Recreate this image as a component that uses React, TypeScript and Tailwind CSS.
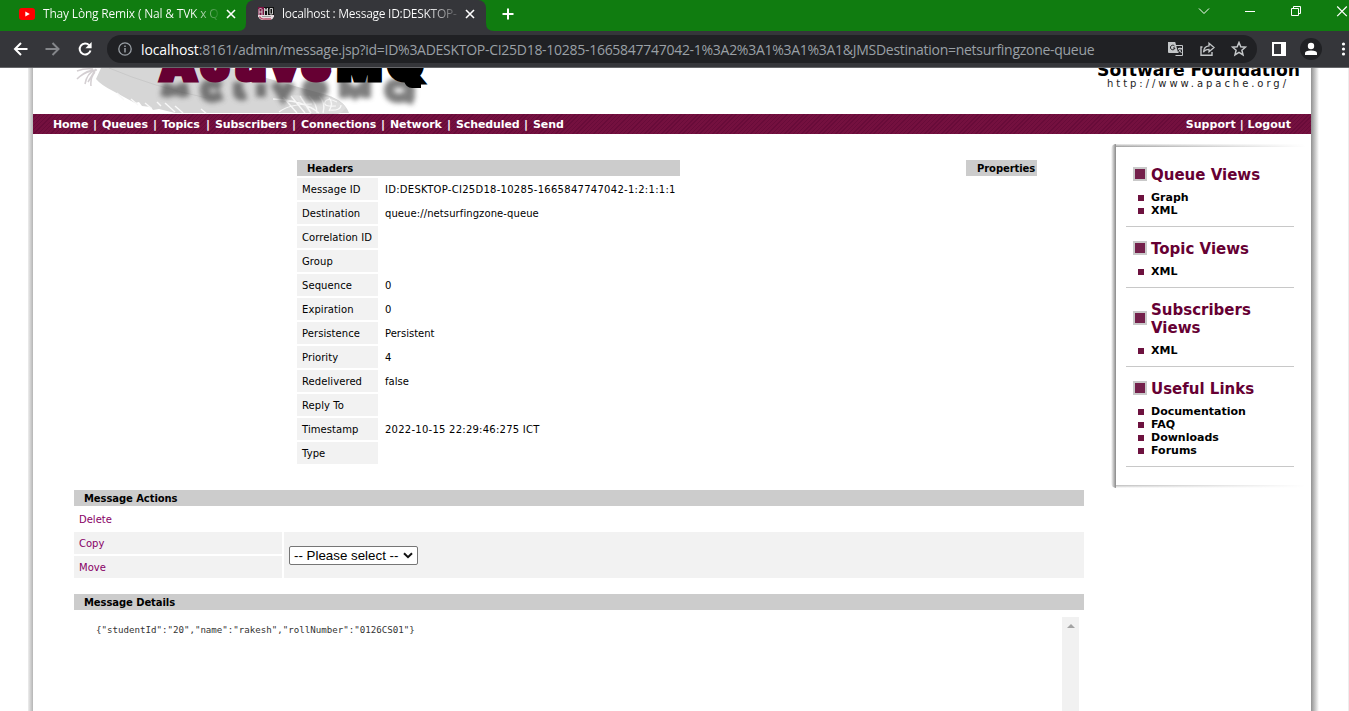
import React from "react";

const headers: { name: string; value: string; tracking?: string }[] = [
  { name: "Message ID", value: "ID:DESKTOP-CI25D18-10285-1665847747042-1:2:1:1:1", tracking: "tracking-[0.28px]" },
  { name: "Destination", value: "queue://netsurfingzone-queue", tracking: "tracking-[0.09px]" },
  { name: "Correlation ID", value: "" },
  { name: "Group", value: "" },
  { name: "Sequence", value: "0" },
  { name: "Expiration", value: "0" },
  { name: "Persistence", value: "Persistent" },
  { name: "Priority", value: "4" },
  { name: "Redelivered", value: "false" },
  { name: "Reply To", value: "" },
  { name: "Timestamp", value: "2022-10-15 22:29:46:275 ICT", tracking: "tracking-[0.25px]" },
  { name: "Type", value: "" },
];

const navItems = [
  { label: "Home", width: "w-[49px]" },
  { label: "Queues", width: "w-[60px]" },
  { label: "Topics", width: "w-[53px]" },
  { label: "Subscribers", width: "w-[86px]" },
  { label: "Connections", width: "w-[89px]" },
  { label: "Network", width: "w-[66px]" },
  { label: "Scheduled", width: "w-[77px]" },
];

function CloseGlyph() {
  return (
    <svg width="10" height="10" viewBox="0 0 10 10" className="shrink-0" fill="none" stroke="#fff" strokeWidth="1.6">
      <path d="M1 1l8 8M9 1l-8 8" />
    </svg>
  );
}

function TabStrip() {
  return (
    <div className="flex h-[31px] bg-[#107c10] text-[12px] text-white">
      <div className="flex h-7 w-[238px] items-center pl-[19px]">
        <svg width="16" height="12" viewBox="0 0 16 12" className="shrink-0">
          <rect width="16" height="12" rx="3" fill="#f00" />
          <path d="M6.3 3.4v5.2L10.8 6z" fill="#fff" />
        </svg>
        <div className="ml-[8px] w-[176px] bg-linear-to-r from-white from-85% to-white/10 bg-clip-text tracking-[-0.19px] whitespace-nowrap text-transparent">
          Thay Lòng Remix ( Nal &amp; TVK x Q
        </div>
        <div className="ml-[7px] flex">
          <CloseGlyph />
        </div>
      </div>
      <div className="flex h-[31px] w-[256px]">
        <svg width="8" height="31" viewBox="0 0 8 31" className="shrink-0">
          <path d="M8 0v31H0q8 0 8-8z" fill="#35363a" />
        </svg>
        <div className="flex w-[240px] items-center rounded-t-[8px] bg-[#35363a] pb-[3px] pl-[12px]">
          <svg width="16" height="14" viewBox="0 0 16 14" className="shrink-0">
            <rect x="0" y="0" width="6" height="8" fill="#7b1443" />
            <rect x="6" y="0" width="10" height="8" fill="#111" />
            <path d="M1 8V2.500L2.500 1 4 2.500V8M1 5h3M6.500 8V1l1.500 3 1.500-3v7M12 1.500h2.500v5.500H12z" fill="none" stroke="#ddd" strokeWidth=".9" />
            <path d="M0 8h16v1.500q-1 3-4 3.500H4Q1 12 0 9.500z" fill="#e9dce1" />
            <path d="M1.500 9.500Q3 12.500 7 12h6" fill="none" stroke="#b84a68" strokeWidth="1.300" />
            <path d="M4 9.500h9" stroke="#999" />
          </svg>
          <div className="ml-[8px] w-[176px] bg-linear-to-r from-white from-82% to-white/15 bg-clip-text tracking-[-0.28px] whitespace-nowrap text-transparent">
            localhost : Message ID:DESKTOP-
          </div>
          <div className="ml-[7px] flex">
            <CloseGlyph />
          </div>
        </div>
        <svg width="8" height="31" viewBox="0 0 8 31" className="shrink-0">
          <path d="M0 0v31h8q-8 0-8-8z" fill="#35363a" />
        </svg>
      </div>
      <svg width="12" height="12" viewBox="0 0 12 12" className="ml-[8px] mt-[8px]" stroke="#fff" strokeWidth="2">
        <path d="M6 .5v11M.5 6h11" />
      </svg>
      <svg width="151" height="16" viewBox="0 0 151 16" className="ml-auto mt-[4px]" fill="none" stroke="#fff" strokeWidth="1">
        <path d="M1 4.500l5 5 5-5" />
        <path d="M47 7.500h10" />
        <path d="M93.500 4.500h7v7h-7zM95.500 4.500v-2h7v7h-2" />
        <path d="M139.200 2.500l9.600 9.600M148.800 2.500l-9.600 9.600" strokeWidth="1.200" />
      </svg>
    </div>
  );
}

function Toolbar() {
  return (
    <div className="flex h-[37px] items-center border-b border-[#66676a] bg-[#35363a]">
      <svg width="80" height="16" viewBox="0 0 80 16" className="ml-[13px] shrink-0" fill="none" strokeWidth="2">
        <path d="M14.500 8H2M8 2L2 8l6 6" stroke="#fff" />
        <path d="M32.500 8H45M39.500 2l6 6-6 6" stroke="#84868a" />
        <path d="M76.300 4.300A5.500 5.500 0 1 0 77.500 9.500" stroke="#fff" />
        <path d="M78.600 1v6.200h-6.200z" fill="#fff" />
      </svg>
      <div className="ml-[14px] flex h-7 w-[1150px] shrink-0 items-center rounded-full bg-[#202124] pl-[11px]">
        <svg width="14" height="14" viewBox="0 0 14 14" className="shrink-0" fill="none" stroke="#9aa0a6" strokeWidth="1.300">
          <circle cx="7" cy="7" r="6.200" />
          <path d="M7 6v4.500M7 3.500v1.500" strokeWidth="1.500" />
        </svg>
        <div className="ml-[9px] flex w-[1021px] text-[14px] tracking-[-0.28px] whitespace-nowrap text-[#9aa0a6]">
          <span className="tracking-[-0.1px] text-white">localhost</span>
          <span>:8161/admin/message.jsp?id=ID%3ADESKTOP-CI25D18-10285-1665847747042-1%3A2%3A1%3A1%3A1&amp;JMSDestination=netsurfingzone-queue</span>
        </div>
        <svg width="82" height="16" viewBox="0 0 82 16" className="ml-[6px] shrink-0" fill="none" stroke="#c4c7c9">
          <path d="M7 4.500h7.500v10H7.500" />
          <path d="M0 1h7.200l3 11H1a1 1 0 0 1-1-1z" fill="#c4c7c9" stroke="none" />
          <path d="M6.500 5A2.300 2.300 0 1 0 7 7H5" stroke="#202124" />
          <path d="M10 7.500h4M12 6.500v1M10.500 8l3 4M13.500 8l-4 4" />
          <path d="M34.500 6H33v8.300h11V11" strokeWidth="1.400" />
          <path d="M41 2.200l5 4.300-5 4.300V8.300q-4 0-5.500 3 .2-6 5.500-6.500z" strokeWidth="1.300" />
          <path d="M71 1.500l1.800 4.300 4.600.4-3.500 3 1.100 4.600-4-2.500-4 2.500 1.100-4.600-3.500-3 4.600-.4z" strokeWidth="1.500" />
        </svg>
      </div>
      <svg width="92" height="22" viewBox="0 0 92 22" className="shrink-0">
        <rect x="15" y="4" width="14" height="14" fill="#fff" />
        <rect x="17" y="6" width="7" height="10" fill="#35363a" />
        <circle cx="54" cy="11" r="11" fill="#202124" />
        <circle cx="54" cy="8" r="3.200" fill="#fff" />
        <path d="M48 17v-1.800q0-2.700 6-2.700t6 2.700V17z" fill="#fff" />
        <circle cx="86.500" cy="6" r="1.600" fill="#fff" />
        <circle cx="86.500" cy="11" r="1.600" fill="#fff" />
        <circle cx="86.500" cy="16" r="1.600" fill="#fff" />
      </svg>
    </div>
  );
}

function Masthead() {
  return (
    <svg width="1278" height="46" viewBox="0 0 1278 46" className="block">
      <defs>
        <filter id="soft" x="-5%" y="-60%" width="110%" height="220%">
          <feGaussianBlur stdDeviation="2.800" />
        </filter>
      </defs>
      <path d="M68 0h130l60 17 36 10q18 6 22 18H142l-16-4-6 1-2-3-9-1-3-4-4 1-22-12Q68 17 63 11z" fill="#d6d6d6" />
      <path d="M258 27l38 2q14 5 17 11-5 6-10 6h-25z" fill="#dedede" />
      <path d="M64 2q-9-1-18 7M62 2q-8 3-10 14M62 4q-5 6-4 14M60 1q-8-1-16 2M58 3q-8 2-14 8M63 1q-5 8-8 13" fill="none" stroke="#d4cfd2" strokeWidth="1.500" />
      <g fill="none" stroke="#f8f8f8">
        <path d="M76 0q45 19 98 30" stroke="#c9c9c9" />
        <path d="M84 25l7 7M98 31l7 6M112 35l6 5M124 34l4 4M132 35l10 9M142 38l8 7M168 41l6 5" strokeWidth="1.400" />
        <path d="M240 31q30 1 46 14M250 29l14 16M258 28l14 17M267 28l11 17M276 28q8 8 8 17M286 28q7 7 4 17M296 30q5 5 0 13" strokeWidth="1.400" />
        <path d="M246 44q10-8 33-8M304 34q-10-5-12 0t11 4M308 37q0 6-12 5" strokeWidth="1.200" />
      </g>
      <g filter="url(#soft)" fill="none" stroke="#555" strokeWidth="10" opacity=".75">
        <path d="M132 29l3-14M152 29l-3-14M134 23h16" />
        <path d="M188 18q-17-6-16 5t17 4M205 14v10q0 5 8 3M228 15v14M242 15l8 13 8-13" />
        <path d="M290 28q-15 4-16-5t8-8 8 7h-13" />
        <path d="M311 30V16l11 10 11-10v14M356 23q0-9 11-8t10 8-11 7-10-8M368 28l13 4" />
      </g>
      <g fontFamily="Inter, sans-serif" fontWeight="900" fontSize="46" strokeWidth="5">
        <text x="127 168 201 219 237 269" y="11.500" fill="#660033" stroke="#660033">Active</text>
        <text x="304.500 354.500" y="11.500" fill="#000" stroke="#000">MQ</text>
        <path d="M366 8h16v4.500h6V20h-9q-6 0-8-7z" fill="#000" />
      </g>
      <g fontFamily="DejaVu Sans, sans-serif">
        <text x="1064" y="8" fontSize="18" fontWeight="700" textLength="203" lengthAdjust="spacingAndGlyphs">Software Foundation</text>
        <text x="1074" y="18.500" fontSize="10" textLength="179" fill="#222">http://www.apache.org/</text>
      </g>
    </svg>
  );
}

function NavBar() {
  return (
    <div className="flex h-5 items-center bg-[#6a0c3c] bg-[repeating-linear-gradient(135deg,#74103f_0px,#74103f_2px,#680b39_2px,#680b39_3px)] px-5 pt-[2px] text-[11px] font-bold tracking-[-0.1px] text-white">
      {navItems.map((item) => (
        <div key={item.label} className={"flex shrink-0 justify-between whitespace-nowrap pr-[5px] " + item.width}>
          <span>{item.label}</span>
          <span>|</span>
        </div>
      ))}
      <span>Send</span>
      <span className="ml-auto tracking-[0.05px] whitespace-pre">Support | Logout</span>
    </div>
  );
}

function Bar({ children }: { children: React.ReactNode }) {
  return <div className="flex h-4 items-center bg-[#ccc] pl-[10px] text-[10px] font-bold tracking-[-0.08px] whitespace-nowrap">{children}</div>;
}

function SideGroup({ title, links, wrap }: { title: string; links: string[]; wrap?: boolean }) {
  return (
    <div className="mb-[13px] border-b border-[#c8c8c8] pb-[9px]">
      <div className="flex items-center pl-[7px]">
        <div className="mb-[2px] size-[14px] shrink-0 border-2 border-[#c9c9c9] bg-[#74204b]" />
        <div className={(wrap ? "w-[110px]" : "w-[130px]") + " ml-[4px] text-[15px] leading-[18px] font-bold text-[#660033]"}>{title}</div>
      </div>
      <ul className="mt-[7px] pl-[12px]">
        {links.map((l) => (
          <li key={l} className="flex h-[13px] items-center text-[11px] leading-[13px] font-bold">
            <span className="mt-px mr-[7px] size-[6px] bg-[#6d123f]" />
            {l}
          </li>
        ))}
      </ul>
    </div>
  );
}

function Sidebar() {
  return (
    <aside className="mt-[10px] flex h-[344px] w-[200px] shrink-0">
      <div className="w-[5px] rounded-l-[5px] bg-linear-to-r from-white to-[#888]" />
      <div className="flex grow flex-col">
        <div className="h-[3px] bg-[linear-gradient(to_right,transparent,white_97%),linear-gradient(to_bottom,#eee,#999)]" />
        <div className="grow rounded-l-[3px] bg-white pt-[19px] pr-[17px] pl-[10px]">
          <SideGroup title="Queue Views" links={["Graph", "XML"]} />
          <SideGroup title="Topic Views" links={["XML"]} />
          <SideGroup title="Subscribers Views" links={["XML"]} wrap />
          <SideGroup title="Useful Links" links={["Documentation", "FAQ", "Downloads", "Forums"]} />
        </div>
        <div className="h-[3px] bg-[linear-gradient(to_right,transparent,white_97%),linear-gradient(to_bottom,#bbb,#fff)]" />
      </div>
    </aside>
  );
}

function Main() {
  return (
    <main className="ml-[41px] w-[1010px] pt-[26px] text-[10px]">
      <div className="flex items-start">
        <div className="ml-[223px] w-[383px]">
          <Bar>Headers</Bar>
          {headers.map((h) => (
            <div key={h.name} className="mt-[2px] flex h-[22px] items-center gap-[2px] whitespace-nowrap">
              <div className="flex h-full w-[81px] items-center bg-[#f2f2f2] pl-[5px] tracking-[0.08px]">{h.name}</div>
              <div className={"pl-[5px] " + (h.tracking ?? "")}>{h.value}</div>
            </div>
          ))}
        </div>
        <div className="ml-[286px] w-[71px]">
          <Bar><span className="pl-px">Properties</span></Bar>
        </div>
      </div>
      <div className="mt-[26px]">
        <Bar>Message Actions</Bar>
        <div className="mt-[2px] flex h-[22px] items-center pl-[5px] text-[#880066]">Delete</div>
        <div className="mt-[2px] flex gap-[2px]">
          <div className="flex w-[208px] flex-col gap-[2px] text-[#880066]">
            <div className="flex h-[22px] items-center bg-[#f2f2f2] pl-[5px]">Copy</div>
            <div className="flex h-[22px] items-center bg-[#f2f2f2] pl-[5px]">Move</div>
          </div>
          <div className="flex grow items-center bg-[#f2f2f2] pl-[5px]">
            <div className="flex h-[19px] w-[129px] items-center rounded-[2px] border border-[#767676] bg-white pl-[4px] font-['Liberation_Sans',sans-serif] text-[13.33px] whitespace-nowrap">
              <span className="w-[107px] pt-px">-- Please select --</span>
              <svg width="10" height="7" viewBox="0 0 10 7" className="ml-[2px]" fill="none" stroke="#111" strokeWidth="2">
                <path d="M1 1.200l4 4 4-4" />
              </svg>
            </div>
          </div>
        </div>
      </div>
      <div className="mt-4">
        <Bar>Message Details</Bar>
        <div className="mt-[7px] flex h-[120px] justify-between pr-[5px] pl-[22px]">
          <pre className="pt-[6px] font-['DejaVu_Sans_Mono',monospace] text-[9.14px] leading-[14px] text-[#333]">{'{"studentId":"20","name":"rakesh","rollNumber":"0126CS01"}'}</pre>
          <div className="flex w-[17px] justify-center bg-[#f1f1f1] pt-[7px]">
            <svg width="8" height="4" viewBox="0 0 8 4">
              <path d="M4 0l4 4H0z" fill="#a3a3a3" />
            </svg>
          </div>
        </div>
      </div>
    </main>
  );
}

export default function App() {
  return (
    <div className="h-[711px] w-[1349px] overflow-hidden bg-white font-['Open_Sans',sans-serif]">
      <TabStrip />
      <Toolbar />
      <div className="flex h-[643px] overflow-hidden font-['DejaVu_Sans',sans-serif] text-black">
        <div className="ml-[28px] w-[5px] shrink-0 bg-linear-to-r from-[#eee] to-[#b5b5b5]" />
        <div className="w-[1278px] shrink-0">
          <Masthead />
          <NavBar />
          <div className="flex">
            <Main />
            <div className="w-[27px] shrink-0" />
            <Sidebar />
          </div>
        </div>
        <div className="w-[8px] shrink-0 bg-linear-to-r from-[#919191] to-white" />
        <div className="ml-auto w-px bg-[#ededed]" />
      </div>
    </div>
  );
}
